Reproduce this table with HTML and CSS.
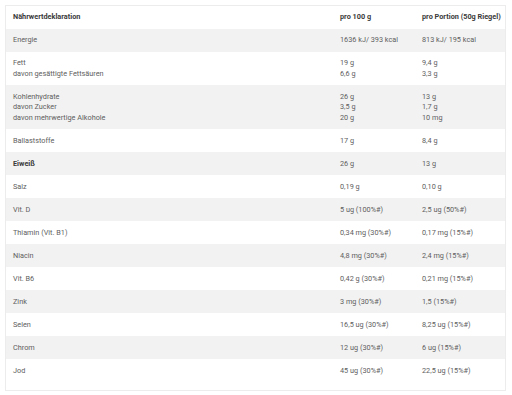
FILE: index.html
```html
<!DOCTYPE html>
<html lang="de">
<head>
<meta charset="utf-8">
<title>Nährwertdeklaration</title>
<link rel="stylesheet" href="styles.css">
</head>
<body>
<div class="panel">
<table class="nutri">
<colgroup><col class="c1"><col class="c2"><col class="c3"></colgroup>
<thead>
<tr><th>Nährwertdeklaration</th><th>pro 100 g</th><th>pro Portion (50g Riegel)</th></tr>
</thead>
<tbody>
<tr><td>Energie</td><td>1636 kJ/ 393 kcal</td><td>813 kJ/ 195 kcal</td></tr>
<tr><td>Fett<br>davon gesättigte Fettsäuren</td><td>19 g<br>6,6 g</td><td>9,4 g<br>3,3 g</td></tr>
<tr><td>Kohlenhydrate<br>davon Zucker<br>davon mehrwertige Alkohole</td><td>26 g<br>3,5 g<br>20 g</td><td>13 g<br>1,7 g<br>10 mg</td></tr>
<tr><td>Ballaststoffe</td><td>17 g</td><td>8,4 g</td></tr>
<tr><td class="strong">Eiweiß</td><td>26 g</td><td>13 g</td></tr>
<tr><td>Salz</td><td>0,19 g</td><td>0,10 g</td></tr>
<tr><td>Vit. D</td><td>5 ug (100%#)</td><td>2,5 ug (50%#)</td></tr>
<tr><td>Thiamin (Vit. B1)</td><td>0,34 mg (30%#)</td><td>0,17 mg (15%#)</td></tr>
<tr><td>Niacin</td><td>4,8 mg (30%#)</td><td>2,4 mg (15%#)</td></tr>
<tr><td>Vit. B6</td><td>0,42 g (30%#)</td><td>0,21 mg (15%#)</td></tr>
<tr><td>Zink</td><td>3 mg (30%#)</td><td>1,5 (15%#)</td></tr>
<tr><td>Selen</td><td>16,5 ug (30%#)</td><td>8,25 ug (15%#)</td></tr>
<tr><td>Chrom</td><td>12 ug (30%#)</td><td>6 ug (15%#)</td></tr>
<tr class="last"><td>Jod</td><td>45 ug (30%#)</td><td>22,5 ug (15%#)</td></tr>
</tbody>
</table>
</div>
</body>
</html>
```
FILE: styles.css
```css
html, body {
  margin: 0;
  padding: 0;
  background: #ffffff;
}
body {
  font-family: Roboto, "Liberation Sans", Arial, sans-serif;
  font-size: 7.3px;
  line-height: 10.5px;
  color: #5e5e5e;
}
.panel {
  margin: 5px 5px 0 5px;
  width: 501px;
  border: 1px solid #ececec;
  box-sizing: border-box;
  padding-bottom: 8px;
}
.nutri {
  width: 100%;
  border-collapse: collapse;
  table-layout: fixed;
}
.c1 { width: 327px; }
.c2 { width: 82px; }
.c3 { width: auto; }
.nutri th,
.nutri td {
  text-align: left;
  vertical-align: top;
  padding: 6.3px 0 6.2px 7px;
}
.nutri th {
  font-weight: 700;
  color: #3a3a3a;
}
.nutri tbody tr:nth-child(odd) {
  background: #f2f2f2;
}
.strong {
  font-weight: 700;
  color: #3a3a3a;
}
```
